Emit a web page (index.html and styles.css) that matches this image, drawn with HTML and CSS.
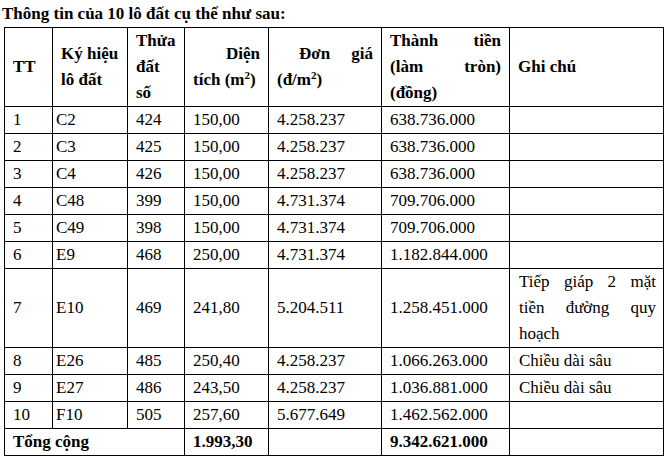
FILE: index.html
```html
<!DOCTYPE html>
<html lang="vi">
<head>
<meta charset="utf-8">
<title>Thông tin lô đất</title>
<link rel="stylesheet" href="styles.css">
</head>
<body>
<p class="title">Thông tin của 10 lô đất cụ thể như sau:</p>
<table class="lots">
  <colgroup>
    <col class="c-tt"><col class="c-ky"><col class="c-thua"><col class="c-dt"><col class="c-dg"><col class="c-tien"><col class="c-ghi">
  </colgroup>
  <thead>
    <tr>
      <th>TT</th>
      <th><span class="ln">Ký hiệu</span><span class="ln">lô đất</span></th>
      <th><span class="ln">Thửa</span><span class="ln">đất</span><span class="ln">số</span></th>
      <th><span class="ln ln-right">Diện</span><span class="ln">tích (m<sup>2</sup>)</span></th>
      <th><span class="ln ln-just ln-indent">Đơn giá</span><span class="ln">(đ/m<sup>2</sup>)</span></th>
      <th><span class="ln ln-just">Thành tiền</span><span class="ln ln-just">(làm tròn)</span><span class="ln">(đồng)</span></th>
      <th>Ghi chú</th>
    </tr>
  </thead>
  <tbody>
    <tr><td>1</td><td class="ky">C2</td><td>424</td><td>150,00</td><td>4.258.237</td><td>638.736.000</td><td></td></tr>
    <tr><td>2</td><td class="ky">C3</td><td>425</td><td>150,00</td><td>4.258.237</td><td>638.736.000</td><td></td></tr>
    <tr><td>3</td><td class="ky">C4</td><td>426</td><td>150,00</td><td>4.258.237</td><td>638.736.000</td><td></td></tr>
    <tr><td>4</td><td class="ky">C48</td><td>399</td><td>150,00</td><td>4.731.374</td><td>709.706.000</td><td></td></tr>
    <tr><td>5</td><td class="ky">C49</td><td>398</td><td>150,00</td><td>4.731.374</td><td>709.706.000</td><td></td></tr>
    <tr><td>6</td><td class="ky">E9</td><td>468</td><td>250,00</td><td>4.731.374</td><td>1.182.844.000</td><td></td></tr>
    <tr><td>7</td><td class="ky">E10</td><td>469</td><td>241,80</td><td>5.204.511</td><td>1.258.451.000</td><td class="note"><span class="ln ln-just">Tiếp giáp 2 mặt</span><span class="ln ln-just">tiền đường quy</span><span class="ln">hoạch</span></td></tr>
    <tr><td>8</td><td class="ky">E26</td><td>485</td><td>250,40</td><td>4.258.237</td><td>1.066.263.000</td><td class="note">Chiều dài sâu</td></tr>
    <tr><td>9</td><td class="ky">E27</td><td>486</td><td>243,50</td><td>4.258.237</td><td>1.036.881.000</td><td class="note">Chiều dài sâu</td></tr>
    <tr><td>10</td><td class="ky">F10</td><td>505</td><td>257,60</td><td>5.677.649</td><td>1.462.562.000</td><td></td></tr>
    <tr class="total"><td colspan="3">Tổng cộng</td><td>1.993,30</td><td></td><td>9.342.621.000</td><td></td></tr>
  </tbody>
</table>
</body>
</html>
```
FILE: styles.css
```css
html, body {
  margin: 0;
  padding: 0;
  background: #ffffff;
}
body {
  font-family: "Liberation Serif", "Times New Roman", serif;
  font-size: 17px;
  color: #000;
}
.title {
  margin: 1px 0 0 2px;
  font-weight: bold;
  line-height: 26px;
  height: 26px;
}
.lots {
  margin-left: 4px;
  border-collapse: collapse;
  table-layout: fixed;
  width: 660px;
}
.c-tt { width: 48px; }
.c-ky { width: 75px; }
.c-thua { width: 57px; }
.c-dt { width: 84px; }
.c-dg { width: 113px; }
.c-tien { width: 128px; }
.c-ghi { width: 154px; }
.lots th, .lots td {
  border: 1px solid #000;
  padding: 0 8px;
  line-height: 26px;
  vertical-align: middle;
  text-align: left;
  white-space: nowrap;
}
.lots th {
  font-weight: bold;
}
.lots td.ky {
  padding-left: 3px;
}
.lots td.note {
  padding-left: 9px;
  padding-right: 7px;
}
.ln {
  display: block;
  text-align: left;
}
.ln-right {
  text-align: right;
}
.ln-just {
  text-align: justify;
  text-align-last: justify;
}
.ln-indent {
  padding-left: 22px;
}
sup {
  font-size: 11px;
  line-height: 0;
  vertical-align: 6px;
}
.total td {
  font-weight: bold;
}
```
